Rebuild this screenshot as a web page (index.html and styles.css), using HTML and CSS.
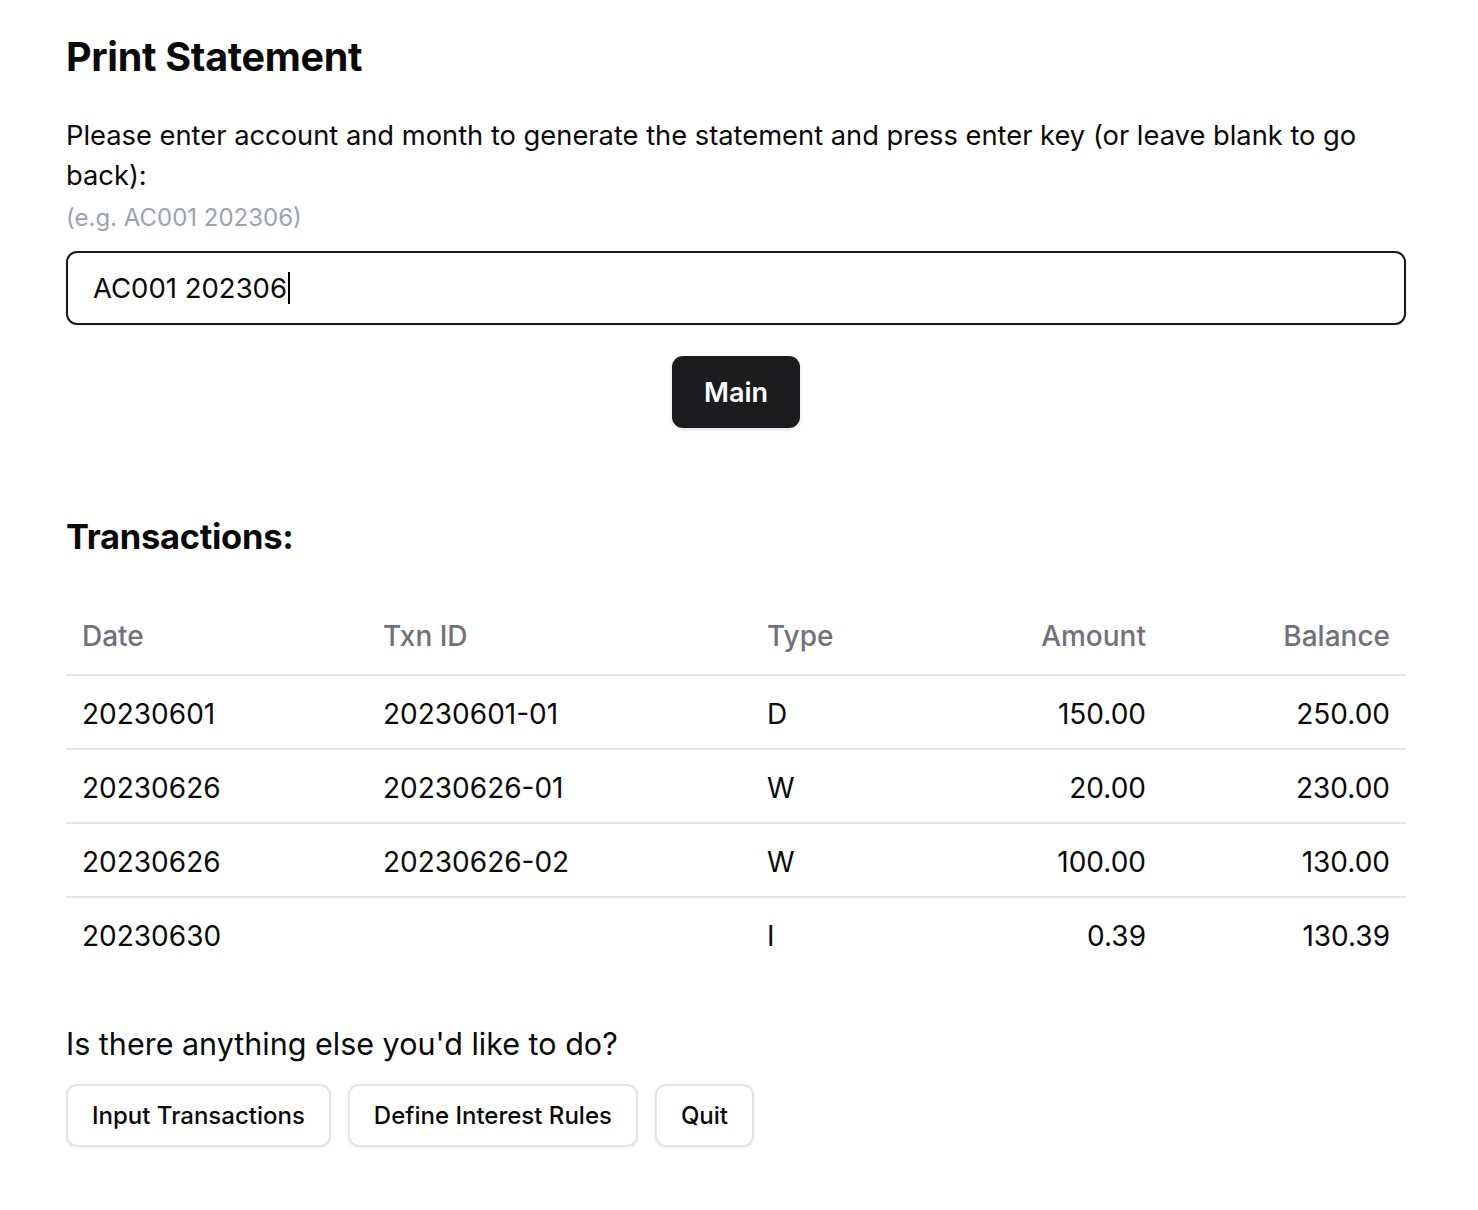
FILE: index.html
```html
<!DOCTYPE html>
<html lang="en">
<head>
<meta charset="utf-8">
<title>Print Statement</title>
<link rel="stylesheet" href="styles.css">
</head>
<body>
<main class="page">
  <h1 class="title">Print Statement</h1>
  <p class="prompt">Please enter account and month to generate the statement and press enter key (or leave blank to go back):</p>
  <p class="hint">(e.g. AC001 202306)</p>
  <div class="field"><span class="field-text">AC001 202306</span><span class="caret"></span></div>
  <div class="actions-center"><button class="btn-primary">Main</button></div>

  <h2 class="section-title">Transactions:</h2>
  <table class="txn-table">
    <colgroup>
      <col class="c-date"><col class="c-id"><col class="c-type"><col class="c-amt"><col class="c-bal">
    </colgroup>
    <thead>
      <tr><th>Date</th><th>Txn ID</th><th>Type</th><th class="num">Amount</th><th class="num">Balance</th></tr>
    </thead>
    <tbody>
      <tr><td>20230601</td><td>20230601-01</td><td>D</td><td class="num">150.00</td><td class="num">250.00</td></tr>
      <tr><td>20230626</td><td>20230626-01</td><td>W</td><td class="num">20.00</td><td class="num">230.00</td></tr>
      <tr><td>20230626</td><td>20230626-02</td><td>W</td><td class="num">100.00</td><td class="num">130.00</td></tr>
      <tr><td>20230630</td><td></td><td>I</td><td class="num">0.39</td><td class="num">130.39</td></tr>
    </tbody>
  </table>

  <p class="question">Is there anything else you'd like to do?</p>
  <div class="choices">
    <button class="btn-outline">Input Transactions</button>
    <button class="btn-outline">Define Interest Rules</button>
    <button class="btn-outline">Quit</button>
  </div>
</main>
</body>
</html>
```

FILE: styles.css
```css
* { box-sizing: border-box; }
html, body { margin: 0; padding: 0; background: #ffffff; }
body {
  font-family: Inter, "Noto Sans", "Liberation Sans", sans-serif;
  color: #0a0a0a;
}
.page {
  width: 1340px;
  margin-left: 66px;
  padding-top: 35px;
  padding-bottom: 40px;
}
.title {
  margin: 0;
  font-size: 39.5px;
  line-height: 44px;
  font-weight: 700;
  letter-spacing: -0.3px;
}
.prompt {
  margin: 37px 0 0;
  font-size: 27.3px;
  line-height: 40px;
  font-weight: 400;
}
.hint {
  margin: 7px 0 0;
  font-size: 24px;
  line-height: 30px;
  color: #9ca3af;
}
.field {
  margin-top: 18px;
  height: 74px;
  border: 2px solid #18181b;
  border-radius: 11px;
  padding: 0 25px;
  display: flex;
  align-items: center;
  font-size: 27.5px;
  box-shadow: 0 1px 2px rgba(0,0,0,0.08);
}
.caret {
  display: inline-block;
  width: 2px;
  height: 32px;
  background: #000;
  margin-left: 1px;
}
.actions-center {
  margin-top: 31px;
  display: flex;
  justify-content: center;
}
.btn-primary {
  font-family: inherit;
  width: 128px;
  height: 72px;
  border: none;
  border-radius: 11px;
  background: #1c1c1e;
  color: #fff;
  font-size: 27px;
  font-weight: 600;
  box-shadow: 0 2px 4px rgba(0,0,0,0.12);
}
.section-title {
  margin: 89px 0 0;
  font-size: 34.5px;
  line-height: 40px;
  font-weight: 700;
  letter-spacing: -0.3px;
}
.txn-table {
  margin-top: 43px;
  width: 1340px;
  border-collapse: collapse;
  table-layout: fixed;
  font-size: 28px;
}
.c-date { width: 301px; }
.c-id { width: 384px; }
.c-type { width: 205px; }
.c-amt { width: 206px; }
.c-bal { width: 244px; }
.txn-table th {
  text-align: left;
  font-weight: 500;
  color: #71717a;
  line-height: 36px;
  padding: 18px 16px 20px;
  border-bottom: 2px solid #e4e4e7;
}
.txn-table td {
  line-height: 36px;
  padding: 20px 16px 16px;
  border-bottom: 2px solid #e4e4e7;
}
.txn-table tbody tr:last-child td { border-bottom: none; }
.txn-table .num { text-align: right; }
.question {
  margin: 56px 0 0;
  font-size: 30.5px;
  line-height: 36px;
}
.choices {
  margin-top: 22px;
  display: flex;
  gap: 17px;
}
.btn-outline {
  font-family: inherit;
  height: 63px;
  padding: 0 24px;
  background: #fff;
  border: 2px solid #e4e4e7;
  border-radius: 11px;
  font-size: 24px;
  font-weight: 500;
  color: #0a0a0a;
  box-shadow: 0 1px 3px rgba(0,0,0,0.08);
}
```
